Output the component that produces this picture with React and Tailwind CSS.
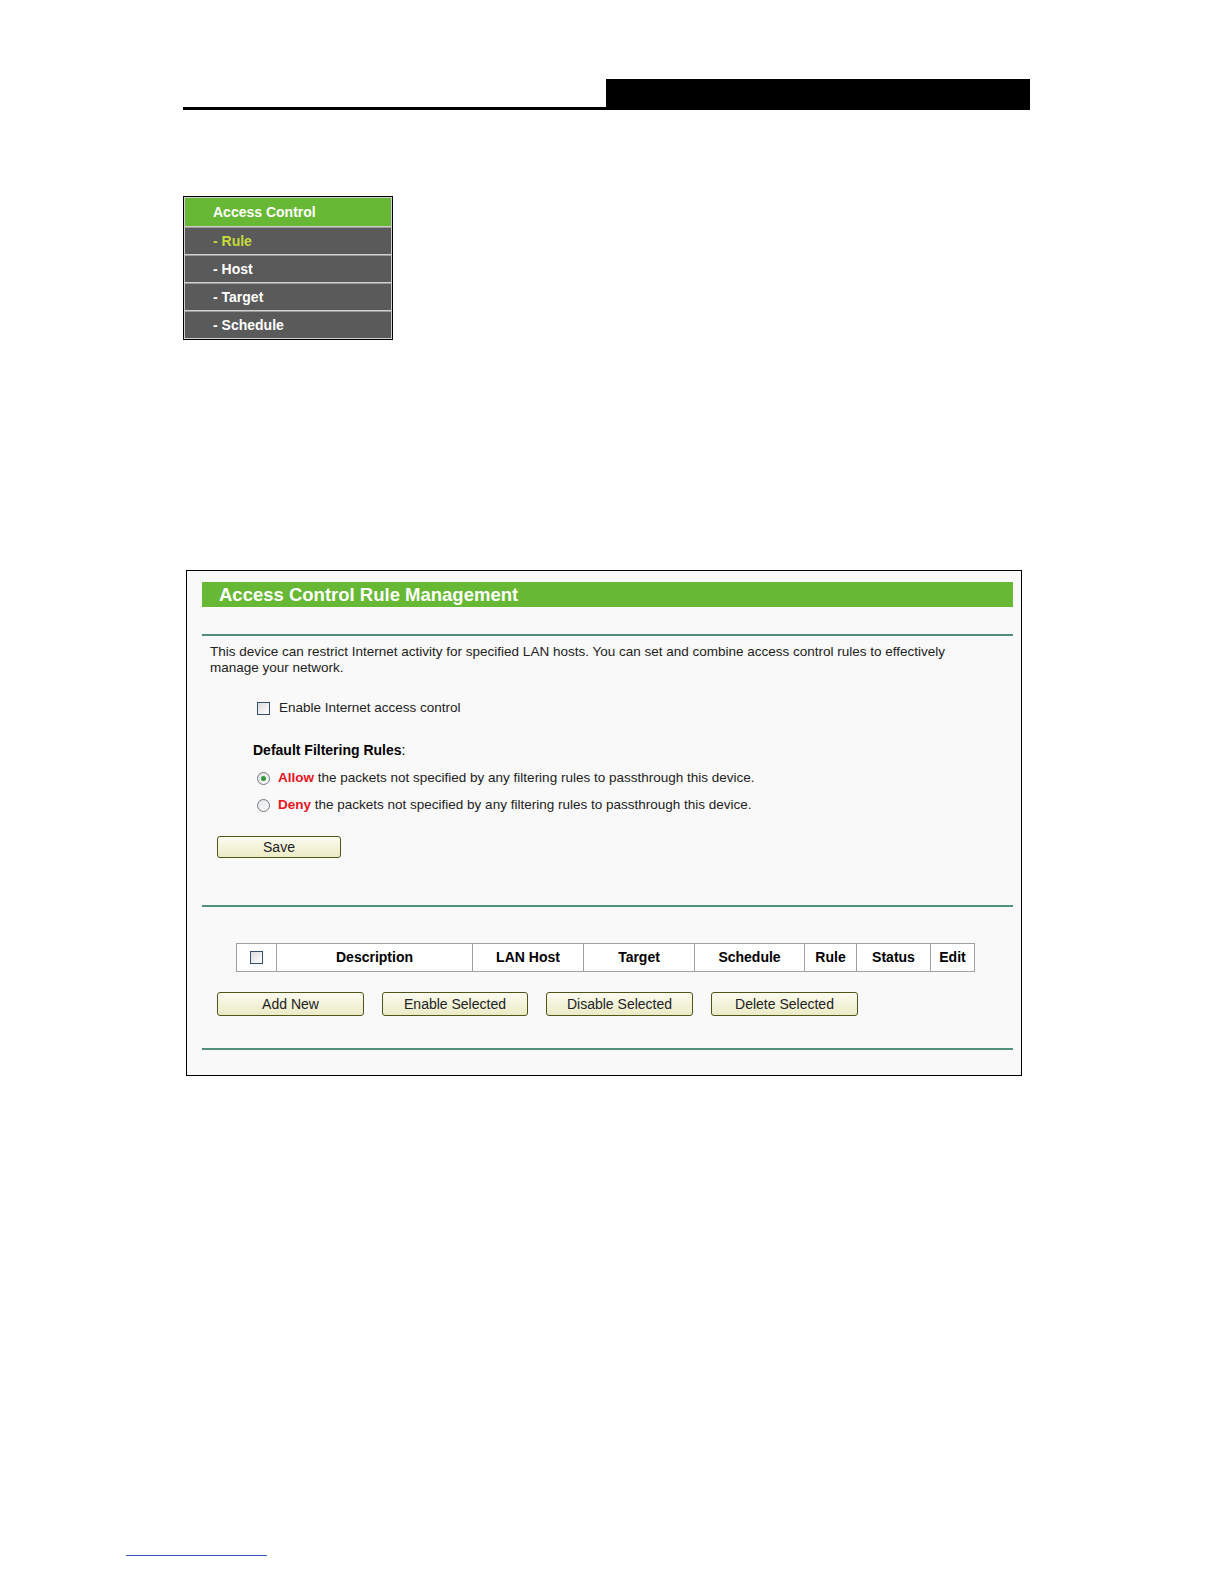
import React from 'react';

const font = { fontFamily: '"Liberation Sans", Arial, sans-serif' };

function Checkbox() {
    return (
        <span className="inline-block w-[13px] h-[13px] border border-[#33506e] bg-gradient-to-br from-[#dcdcdc] to-[#ffffff]" />
    );
}

function Radio({ checked }) {
    return (
        <span className="inline-flex items-center justify-center w-[13px] h-[13px] rounded-full border border-[#6f7a85] bg-gradient-to-br from-[#e2e2e2] to-[#ffffff]">
            {checked && <span className="w-[5px] h-[5px] rounded-full bg-[#2f9a3c]" />}
        </span>
    );
}

function Btn({ children, w, h = 'h-[24px]' }) {
    return (
        <button className={`${h} ${w} rounded-[3px] border border-[#4f5518] bg-gradient-to-b from-[#fbfbef] to-[#ecebc6] text-[14px] text-[#222]`}>
            {children}
        </button>
    );
}

function MenuItem({ label, active }) {
    return (
        <div className={`h-[27px] mt-[1px] pl-[28px] flex items-center bg-[#5a5a5a] border-t border-[#9a9a9a] text-[14px] font-bold ${active ? 'text-[#c4dc3c]' : 'text-white'}`}>
            - {label}
        </div>
    );
}

export default function App() {
    const cols = [
        { label: '', w: 'w-[39px]' },
        { label: 'Description', w: 'w-[196px]' },
        { label: 'LAN Host', w: 'w-[111px]' },
        { label: 'Target', w: 'w-[111px]' },
        { label: 'Schedule', w: 'w-[110px]' },
        { label: 'Rule', w: 'w-[52px]' },
        { label: 'Status', w: 'w-[74px]' },
        { label: 'Edit', w: 'w-[44px]' },
    ];

    return (
        <div className="w-[1224px] h-[1584px] bg-white relative" style={font}>
            {/* header bar */}
            <div className="pt-[79px] pl-[183px] flex">
                <div className="w-[423px] h-[31px] border-b-[3px] border-black" />
                <div className="w-[424px] h-[31px] bg-black" />
            </div>

            {/* side menu */}
            <div className="mt-[86px] ml-[183px] w-[210px] border border-black p-[1px] bg-[#d0d0d0]">
                <div className="h-[28px] pl-[28px] flex items-center bg-[#67b935] text-white text-[14px] font-bold">
                    Access Control
                </div>
                <MenuItem label="Rule" active />
                <MenuItem label="Host" />
                <MenuItem label="Target" />
                <MenuItem label="Schedule" />
            </div>

            {/* rule management panel */}
            <div className="mt-[230px] ml-[186px] w-[836px] h-[506px] border border-black bg-[#f9f9f9] pl-[15px] pt-[11px]">
                <div className="w-[811px] h-[25px] bg-[#67b935] pl-[17px] flex items-center text-white text-[18.5px] font-bold">
                    Access Control Rule Management
                </div>
                <div className="mt-[27px] w-[811px] h-[2px] bg-[#4f8f7b]" />

                <p className="mt-[8px] pl-[8px] pr-[40px] text-[13.5px] leading-[16px] text-[#222]">
                    This device can restrict Internet activity for specified LAN hosts. You can set and combine access control rules to effectively manage your network.
                </p>

                <div className="mt-[23px] pl-[55px] h-[18px] flex items-center gap-[9px] text-[13.5px] text-[#222]">
                    <Checkbox />
                    <span>Enable Internet access control</span>
                </div>

                <div className="mt-[24px] pl-[51px] h-[18px] flex items-center text-[14px] font-bold text-black">
                    Default Filtering Rules<span className="font-normal">:</span>
                </div>

                <div className="mt-[10px] pl-[55px] h-[18px] flex items-center gap-[8px] text-[13.5px] text-[#222]">
                    <Radio checked />
                    <span><b className="text-[#e8131b]">Allow</b> the packets not specified by any filtering rules to passthrough this device.</span>
                </div>
                <div className="mt-[9px] pl-[55px] h-[18px] flex items-center gap-[8px] text-[13.5px] text-[#222]">
                    <Radio />
                    <span><b className="text-[#e8131b]">Deny</b> the packets not specified by any filtering rules to passthrough this device.</span>
                </div>

                <div className="mt-[22px] pl-[15px] flex">
                    <Btn w="w-[124px]" h="h-[22px]">Save</Btn>
                </div>

                <div className="mt-[47px] w-[811px] h-[2px] bg-[#4f8f7b]" />

                <div className="mt-[36px] ml-[34px] flex w-max border border-[#a0a0a0] bg-white">
                    {cols.map((c, i) => (
                        <div
                            key={i}
                            className={`${c.w} h-[27px] flex items-center justify-center text-[14px] font-bold text-black ${i > 0 ? 'border-l border-[#a0a0a0]' : ''}`}
                        >
                            {i === 0 ? <Checkbox /> : c.label}
                        </div>
                    ))}
                </div>

                <div className="mt-[20px] pl-[15px] flex gap-[18px]">
                    <Btn w="w-[147px]">Add New</Btn>
                    <Btn w="w-[146px]">Enable Selected</Btn>
                    <Btn w="w-[147px]">Disable Selected</Btn>
                    <Btn w="w-[147px]">Delete Selected</Btn>
                </div>

                <div className="mt-[32px] w-[811px] h-[2px] bg-[#4f8f7b]" />
            </div>

            {/* footer rule */}
            <div className="mt-[479px] ml-[126px] w-[141px] h-px bg-[#3a56c8]" />
        </div>
    );
}
